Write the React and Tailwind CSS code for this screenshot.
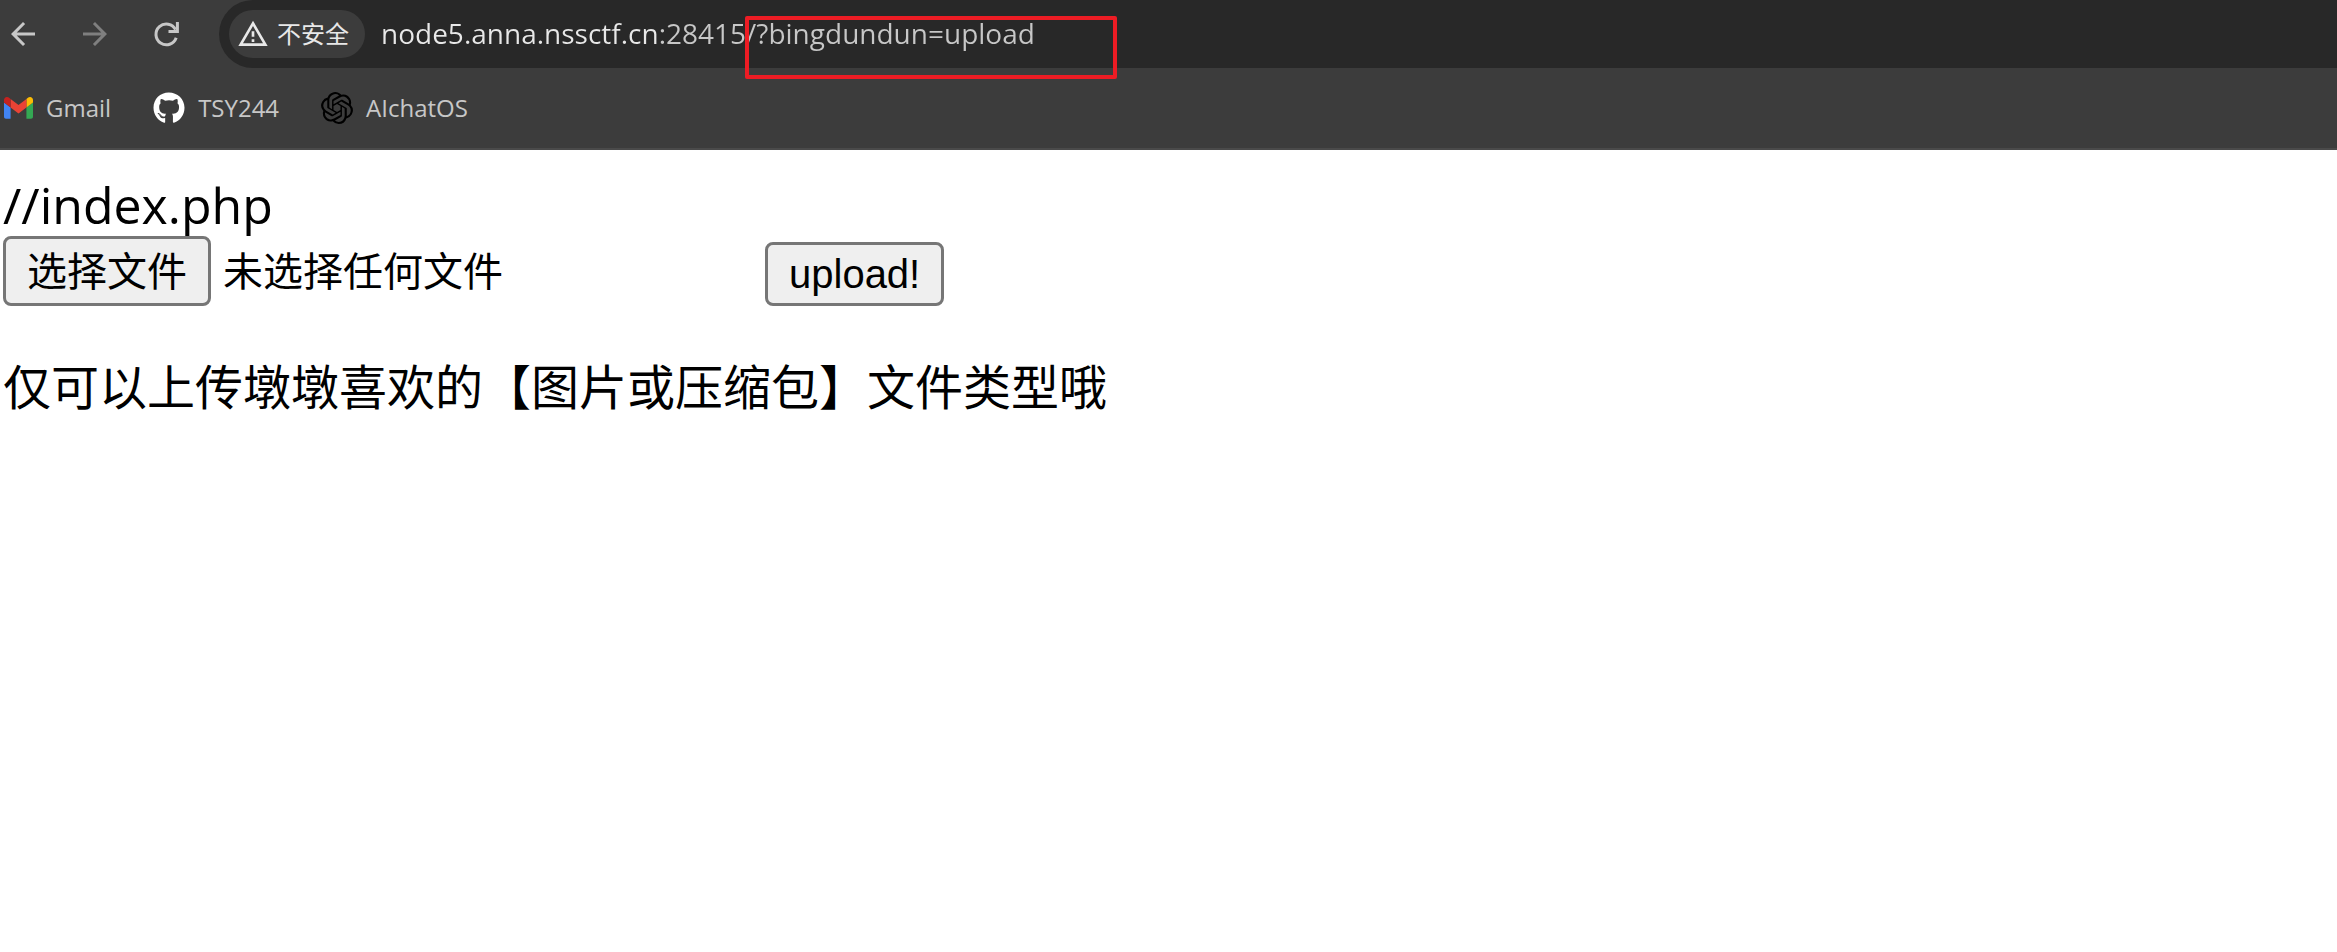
import React from "react";
import { MdArrowBack, MdArrowForward, MdOutlineWarningAmber } from "react-icons/md";
import { FaGithub } from "react-icons/fa";
import { SiOpenai } from "react-icons/si";

function ReloadIcon() {
  return (
    <svg viewBox="0 0 27 27" className="size-[27px]" fill="none" stroke="currentColor" strokeWidth="3" aria-hidden="true">
      <path d="M23.2 16.8A10.4 10.4 0 1 1 22.6 8.6" />
      <path d="M24.4 1v9.6H15.5" />
    </svg>
  );
}

function GmailIcon() {
  return (
    <svg viewBox="52 42 88 66" className="w-[29px]" aria-hidden="true">
      <path fill="#4285f4" d="M58 108h14V74L52 59v43c0 3.32 2.69 6 6 6" />
      <path fill="#34a853" d="M120 108h14c3.32 0 6-2.69 6-6V59l-20 15" />
      <path fill="#fbbc04" d="M120 48v26l20-15v-8c0-7.42-8.47-11.65-14.4-7.2" />
      <path fill="#ea4335" d="M72 74V48l24 18 24-18v26L96 92" />
      <path fill="#c5221f" d="M52 51v8l20 15V48l-5.6-4.2c-5.94-4.45-14.4-.22-14.4 7.2" />
    </svg>
  );
}

function Bookmark({ icon, children }) {
  return (
    <a href="#" className="flex items-center gap-[13px]">
      {icon}
      {children}
    </a>
  );
}

function Toolbar() {
  return (
    <div className="relative flex h-[68px] items-center">
      <nav className="flex items-center gap-9 pl-[5px] text-[#c7c7c7]">
        <button type="button" aria-label="后退"><MdArrowBack className="size-9" /></button>
        <button type="button" aria-label="前进" className="text-[#7f7f7f]"><MdArrowForward className="size-9" /></button>
        <button type="button" aria-label="重新加载" className="pl-1"><ReloadIcon /></button>
      </nav>
      <div className="ml-[39px] flex h-full min-w-0 flex-1 items-center gap-4 rounded-l-full bg-[#282828] pl-[10px]">
        <button type="button" className="flex h-12 shrink-0 items-center gap-2 rounded-full bg-[#3c3c3c] pr-4 pl-2 text-2xl text-[#e8e8e8]">
          <MdOutlineWarningAmber className="size-8" />
          不安全
        </button>
        <input
          aria-label="地址"
          defaultValue="node5.anna.nssctf.cn:28415/?bingdundun=upload"
          className="min-w-0 flex-1 bg-linear-to-r from-[#e8e8e8] from-[280px] to-[#c7c7c7] to-[280px] bg-clip-text pb-[2px] text-[28px] leading-10 text-transparent outline-none"
        />
      </div>
      <div className="pointer-events-none absolute top-4 left-[745px] h-[63px] w-[372px] rounded-xs border-4 border-[#ed1c24]" />
    </div>
  );
}

export default function App() {
  return (
    <div className="min-h-screen bg-white font-['Open_Sans','Noto_Sans_CJK_SC',sans-serif] text-black">
      <header className="border-b-2 border-[#4a4a4a] bg-[#3c3c3c]">
        <Toolbar />
        <nav className="flex h-20 items-center gap-[42px] pl-1 text-2xl text-[#c7c7c7]">
          <Bookmark icon={<GmailIcon />}>Gmail</Bookmark>
          <Bookmark icon={<FaGithub className="size-8 text-white" />}>TSY244</Bookmark>
          <Bookmark icon={<SiOpenai className="size-8 text-black" />}>AIchatOS</Bookmark>
        </nav>
      </header>
      <main className="px-[3px] pt-6">
        <p className="text-[50px] leading-[62px]">//index.php</p>
        <form className="flex items-end" onSubmit={(e) => e.preventDefault()}>
          <label className="flex w-[762px] items-center gap-3 text-[40px]">
            <input type="file" className="sr-only" />
            <span className="flex h-[70px] items-center rounded-lg border-3 border-[#767676] bg-[#efefef] px-[21px]">选择文件</span>
            未选择任何文件
          </label>
          <button type="submit" className="h-16 rounded-lg border-3 border-[#767676] bg-[#efefef] px-[21px] font-['Liberation_Sans',sans-serif] text-[40px] leading-none">
            upload!
          </button>
        </form>
        <p className="mt-[50px] text-5xl leading-[62px]">仅可以上传墩墩喜欢的【图片或压缩包】文件类型哦</p>
      </main>
    </div>
  );
}
